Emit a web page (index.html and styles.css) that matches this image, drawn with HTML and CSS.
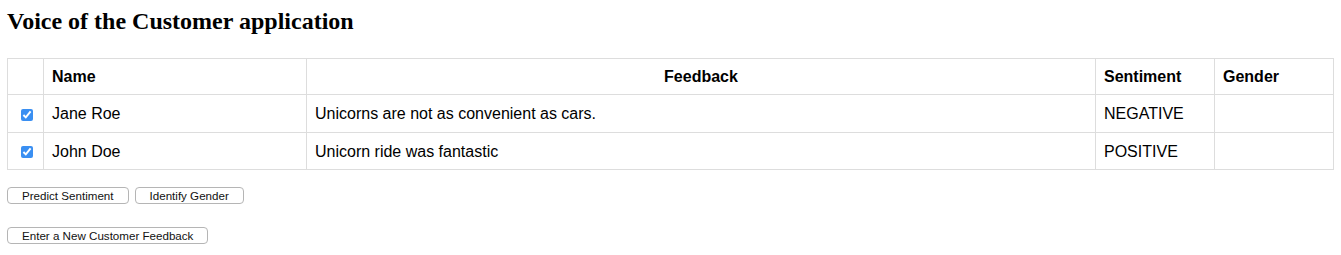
FILE: index.html
```html
<!DOCTYPE html>
<html lang="en">
<head>
  <meta charset="UTF-8" />
  <title>Voice of the Customer application</title>
  <link rel="stylesheet" href="styles.css">
</head>
<body>
  <h2 class="title">Voice of the Customer application</h2>

  <table class="feedback-table">
    <thead>
      <tr>
        <th class="col-check"></th>
        <th class="col-name">Name</th>
        <th class="col-feedback">Feedback</th>
        <th class="col-sentiment">Sentiment</th>
        <th class="col-gender">Gender</th>
      </tr>
    </thead>
    <tbody>
      <tr>
        <td class="col-check"><input type="checkbox" checked></td>
        <td>Jane Roe</td>
        <td>Unicorns are not as convenient as cars.</td>
        <td>NEGATIVE</td>
        <td></td>
      </tr>
      <tr>
        <td class="col-check"><input type="checkbox" checked></td>
        <td>John Doe</td>
        <td>Unicorn ride was fantastic</td>
        <td>POSITIVE</td>
        <td></td>
      </tr>
    </tbody>
  </table>

  <div class="actions">
    <button type="button" class="btn">Predict Sentiment</button>
    <button type="button" class="btn">Identify Gender</button>
  </div>
  <div class="actions">
    <button type="button" class="btn">Enter a New Customer Feedback</button>
  </div>
</body>
</html>
```

FILE: styles.css
```css
body {
  margin: 0;
  padding: 0 7px;
  font-family: "Liberation Sans", Arial, sans-serif;
  color: #000;
  background: #fff;
}
.title {
  font-family: "Liberation Serif", "Times New Roman", serif;
  font-size: 24px;
  font-weight: bold;
  margin: 7px 0 23px;
  line-height: 28px;
}
.feedback-table {
  width: 1327px;
  border-collapse: collapse;
  font-size: 16px;
}
.feedback-table th,
.feedback-table td {
  border: 1px solid #dddddd;
  padding: 8px 8px;
  line-height: 19px;
  text-align: left;
  vertical-align: middle;
}
.feedback-table th {
  font-weight: bold;
}
.feedback-table td {
  padding-top: 9px;
  padding-bottom: 8.5px;
}
.col-check { width: 19px; }
.col-name { width: 246px; }
.feedback-table th.col-feedback { width: 772px; text-align: center; }
.col-sentiment { width: 102px; }
.feedback-table td.col-check {
  padding-left: 13px;
  padding-right: 3px;
}
.feedback-table input[type="checkbox"] {
  display: block;
  width: 12px;
  height: 12px;
  margin: 2px 0 0;
  accent-color: #3a8ff2;
}
.actions {
  display: flex;
  gap: 6px;
  margin-top: 17px;
}
.actions + .actions {
  margin-top: 23px;
}
.btn {
  font-family: "Liberation Sans", Arial, sans-serif;
  font-size: 11.6px;
  height: 17px;
  padding: 0 14px;
  background: #fff;
  border: 1px solid #b5b5b5;
  border-radius: 4px;
  color: #111;
  line-height: 15px;
}
```
